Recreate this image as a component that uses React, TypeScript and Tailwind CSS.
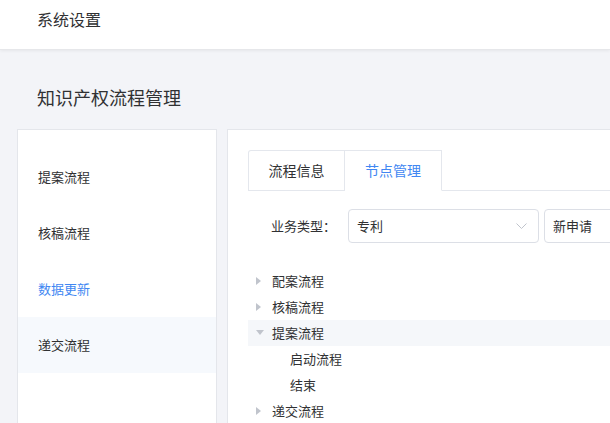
import React from "react";

function Caret({ open }: { open?: boolean }) {
  return (
    <span className="w-[24px] h-full flex items-center justify-center shrink-0">
      {open ? (
        <svg width="8" height="6" viewBox="0 0 8 6">
          <path d="M0 0 L8 0 L4 5 Z" fill="#c0c4cc" />
        </svg>
      ) : (
        <svg width="6" height="8" viewBox="0 0 6 8" className="ml-[-2px]">
          <path d="M0 0 L5 4 L0 8 Z" fill="#c0c4cc" />
        </svg>
      )}
    </span>
  );
}

export default function App() {
  const leftItems = ["提案流程", "核稿流程", "数据更新", "递交流程"];
  return (
    <div className="w-[610px] h-[423px] overflow-hidden bg-[#f3f4f8] font-['Noto_Sans_CJK_SC',sans-serif] text-[#303133]">
      <div className="h-[50px] bg-white border-b border-[#e6e7ea] shadow-[0_1px_3px_rgba(0,0,0,0.06)] pl-[37px] pt-[7px]">
        <span className="text-[16px] leading-[20px]">系统设置</span>
      </div>
      <div className="h-[79px] pl-[37px] pt-[36px]">
        <span className="text-[18px] leading-[22px]">知识产权流程管理</span>
      </div>
      <div className="flex pl-[17px] gap-[10px]">
        <div className="w-[200px] h-[300px] shrink-0 bg-white border border-[#e4e6eb] pt-[19px]">
          {leftItems.map((t, i) => (
            <div
              key={t}
              className={
                "h-[56px] flex items-center pl-[20px] text-[13px] " +
                (i === 2 ? "text-[#4187f2] " : "text-[#303133] ") +
                (i === 3 ? "bg-[#f6f9fd]" : "")
              }
            >
              {t}
            </div>
          ))}
        </div>
        <div className="w-[420px] h-[300px] shrink-0 bg-white border border-[#e4e6eb] pt-[20px] pl-[20px]">
          <div className="flex border-b border-[#e4e7ed] h-[41px]">
            <div className="w-[97px] h-[40px] shrink-0 border-l border-t border-r border-[#e4e7ed] rounded-tl-[3px] flex items-center justify-center text-[14px] text-[#303133]">
              流程信息
            </div>
            <div className="w-[97px] h-[41px] shrink-0 border-t border-r border-[#e4e7ed] border-b border-b-white bg-white flex items-center justify-center text-[14px] text-[#4187f2] mb-[-1px]">
              节点管理
            </div>
          </div>
          <div className="flex items-center mt-[18px] h-[34px]">
            <div className="w-[88px] shrink-0 text-right text-[13px] leading-[16px] text-[#303133]">业务类型：</div>
            <div className="ml-[12px] w-[191px] shrink-0 h-[34px] border border-[#dcdfe6] rounded-[4px] flex items-center pl-[8px] pr-[11px] text-[13px]">
              <span className="flex-1">专利</span>
              <svg width="11" height="7" viewBox="0 0 11 7">
                <path d="M0.5 0.5 L5.5 5.5 L10.5 0.5" fill="none" stroke="#c0c4cc" strokeWidth="1" />
              </svg>
            </div>
            <div className="ml-[5px] w-[120px] h-[34px] border border-[#dcdfe6] rounded-[4px] flex items-center pl-[8px] text-[13px] shrink-0">
              新申请
            </div>
          </div>
          <div className="mt-[25px] text-[13px] text-[#303133]">
            <div className="h-[26px] flex items-center"><Caret /><span>配案流程</span></div>
            <div className="h-[26px] flex items-center"><Caret /><span>核稿流程</span></div>
            <div className="h-[26px] flex items-center bg-[#f5f7fa]"><Caret open /><span>提案流程</span></div>
            <div className="h-[26px] flex items-center pl-[42px]"><span>启动流程</span></div>
            <div className="h-[26px] flex items-center pl-[42px]"><span>结束</span></div>
            <div className="h-[26px] flex items-center"><Caret /><span>递交流程</span></div>
          </div>
        </div>
      </div>
    </div>
  );
}
